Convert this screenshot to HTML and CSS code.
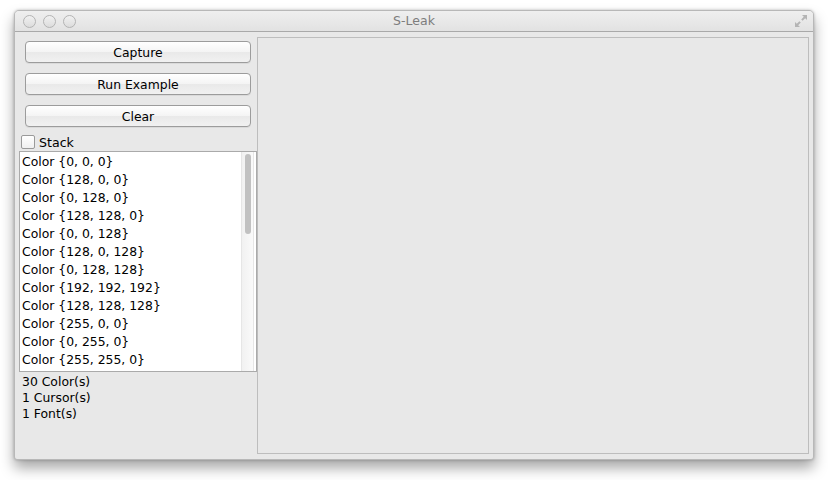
FILE: index.html
```html
<!DOCTYPE html>
<html>
<head>
<meta charset="utf-8">
<link rel="stylesheet" href="styles.css">
</head>
<body>
<div class="window">
  <div class="titlebar">
    <div class="lights"><span class="light"></span><span class="light"></span><span class="light"></span></div>
    <div class="title">S-Leak</div>
    <svg class="fs" width="16" height="16" viewBox="0 0 16 16">
      <path d="M9 2h5v5l-1.8-1.8-2.6 2.6-1.4-1.4 2.6-2.6z" fill="#b4b4b4"/>
      <path d="M7 14H2V9l1.8 1.8 2.6-2.6 1.4 1.4-2.6 2.6z" fill="#b4b4b4"/>
    </svg>
  </div>
  <div class="body">
    <div class="side">
      <button class="btn">Capture</button>
      <button class="btn">Run Example</button>
      <button class="btn">Clear</button>
      <label class="check"><span class="box"></span>Stack</label>
      <div class="list">
        <div class="rows">
          <div class="row">Color {0, 0, 0}</div>
          <div class="row">Color {128, 0, 0}</div>
          <div class="row">Color {0, 128, 0}</div>
          <div class="row">Color {128, 128, 0}</div>
          <div class="row">Color {0, 0, 128}</div>
          <div class="row">Color {128, 0, 128}</div>
          <div class="row">Color {0, 128, 128}</div>
          <div class="row">Color {192, 192, 192}</div>
          <div class="row">Color {128, 128, 128}</div>
          <div class="row">Color {255, 0, 0}</div>
          <div class="row">Color {0, 255, 0}</div>
          <div class="row">Color {255, 255, 0}</div>
        </div>
        <div class="scroll"><div class="thumb"></div></div>
      </div>
      <div class="stats">
        <div>30 Color(s)</div>
        <div>1 Cursor(s)</div>
        <div>1 Font(s)</div>
      </div>
    </div>
    <div class="canvas"></div>
  </div>
</div>
</body>
</html>
```
FILE: styles.css
```css
html, body {
  margin: 0;
  padding: 0;
  background: #ffffff;
}
body {
  padding: 10px 14px 0 14px;
  min-height: 480px;
  box-sizing: border-box;
  font-family: "DejaVu Sans", "Liberation Sans", sans-serif;
  font-size: 12.4px;
  color: #000;
}
.window {
  width: 800px;
  height: 450px;
  box-sizing: border-box;
  background: #e8e8e8;
  border: 1px solid #b8b8b8;
  border-radius: 5px 5px 3px 3px;
  box-shadow: 0 8px 14px rgba(0,0,0,0.35), 0 0 3px rgba(0,0,0,0.25);
  display: flex;
  flex-direction: column;
  overflow: hidden;
}
.titlebar {
  height: 20px;
  flex: none;
  background: linear-gradient(#efefef, #e2e2e2);
  border-bottom: 1px solid #a9a9a9;
  display: flex;
  align-items: center;
  position: relative;
}
.lights {
  display: flex;
  gap: 7px;
  padding-left: 8px;
}
.light {
  width: 11px;
  height: 11px;
  border-radius: 50%;
  border: 1px solid #b3b3b3;
  background: linear-gradient(#f1f1f1, #dcdcdc);
}
.title {
  position: absolute;
  left: 0;
  right: 0;
  text-align: center;
  color: #7d7d7d;
  font-size: 12.5px;
  top: 2px;
}
.fs {
  position: absolute;
  right: 4px;
  top: 2px;
}
.body {
  flex: 1;
  display: flex;
  padding: 5px 4px 5px 4px;
}
.side {
  width: 238px;
  display: flex;
  flex-direction: column;
}
.btn {
  margin: 4px 6px 0 6px;
  height: 22px;
  font-family: inherit;
  font-size: 12.4px;
  color: #000;
  background: linear-gradient(#ffffff, #f4f4f4 50%, #e9e9e9 51%, #f1f1f1);
  border: 1px solid #9c9c9c;
  border-radius: 4px;
  box-shadow: 0 1px 0 rgba(0,0,0,0.06);
  padding: 0;
}
.btn + .btn {
  margin-top: 10px;
}
.check {
  display: flex;
  align-items: center;
  gap: 4px;
  margin: 8px 0 0 2px;
  height: 14px;
  font-size: 12.6px;
}
.box {
  width: 12px;
  height: 12px;
  border: 1px solid #9a9a9a;
  border-radius: 2px;
  background: linear-gradient(#ffffff, #f0f0f0);
}
.list {
  margin-top: 2px;
  height: 221px;
  box-sizing: border-box;
  background: #fff;
  border: 1px solid #aaaaaa;
  display: flex;
}
.rows {
  flex: 1;
  padding: 1px 0 0 2px;
  overflow: hidden;
}
.row {
  height: 18px;
  line-height: 18px;
  white-space: nowrap;
}
.scroll {
  width: 13px;
  margin-right: 2px;
  background: linear-gradient(90deg, #f1f1f1, #fafafa);
  border-left: 1px solid #e6e6e6;
  border-right: 1px solid #e6e6e6;
  padding: 2px 2px;
  box-sizing: border-box;
}
.thumb {
  height: 80px;
  border-radius: 4px;
  background: #c1c1c1;
  margin: 0 0.5px;
}
.stats {
  padding: 2px 0 0 3px;
  line-height: 16px;
}
.canvas {
  flex: 1;
  border: 1px solid #bdbdbd;
  background: #e8e8e8;
}
```
